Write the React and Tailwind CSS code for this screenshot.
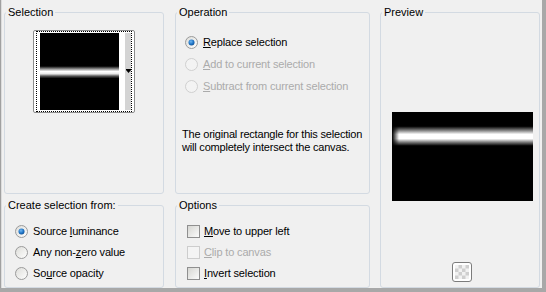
const FONT = "font-['Liberation_Sans','Arial',sans-serif]";

function Group({ title, className, children }) {
  return (
    <div
      className={`relative rounded-[3px] border border-[#d3dae2] ${className}`}
    >
      <span className="absolute left-[1px] top-[-7px] bg-[#f0f0f0] px-[2px] text-[11px] leading-[13px] text-black">
        {title}
      </span>
      {children}
    </div>
  );
}

function Radio({ checked, disabled }) {
  return (
    <svg width="13" height="13" viewBox="0 0 13 13" className="shrink-0">
      <defs>
        <linearGradient id="rbg" x1="0" y1="0" x2="1" y2="1">
          <stop offset="0" stopColor="#dcdcd8" />
          <stop offset="1" stopColor="#ffffff" />
        </linearGradient>
        <radialGradient id="rdot" cx="0.4" cy="0.35" r="0.7">
          <stop offset="0" stopColor="#6fb6f0" />
          <stop offset="0.6" stopColor="#1f74c6" />
          <stop offset="1" stopColor="#124f8f" />
        </radialGradient>
      </defs>
      <circle
        cx="6.5"
        cy="6.5"
        r="6"
        fill={disabled ? "#f3f3f3" : "url(#rbg)"}
        stroke={disabled ? "#cfcfcf" : "#9a9a9a"}
        strokeWidth="1"
      />
      {checked && <circle cx="6.5" cy="6.5" r="3" fill="url(#rdot)" />}
    </svg>
  );
}

function Checkbox({ disabled }) {
  return (
    <span
      className={`h-[13px] w-[13px] shrink-0 border ${
        disabled
          ? "border-[#cdcdcd] bg-[#f4f4f4]"
          : "border-[#8f8f8f] bg-gradient-to-br from-[#d6d6d2] to-[#fbfbfb]"
      }`}
    />
  );
}

function Label({ text, mark, disabled }) {
  const i = text.indexOf(mark);
  return (
    <span
      className={`text-[11px] leading-[13px] tracking-[-0.15px] whitespace-nowrap ${
        disabled ? "text-[#ababab]" : "text-black"
      }`}
    >
      {text.slice(0, i)}
      <u className="underline-offset-[1px]">{mark}</u>
      {text.slice(i + mark.length)}
    </span>
  );
}

function Thumb() {
  return (
    <div className="relative mx-auto mt-[17px] h-[83px] w-[102px] rounded-[2px] border border-[#8c8c8c] bg-white">
      <div className="absolute inset-x-[2px] inset-y-[0px] border border-dotted border-black" />
      <div className="flex pl-[6px] pt-[2px]">
        <svg width="79" height="77" viewBox="0 0 79 77">
          <defs>
            <linearGradient id="tband" x1="0" y1="0" x2="0" y2="1">
              <stop offset="0" stopColor="#000" />
              <stop offset="0.43" stopColor="#000" />
              <stop offset="0.47" stopColor="#9a9a9a" />
              <stop offset="0.5" stopColor="#fff" />
              <stop offset="0.53" stopColor="#e8e8e8" />
              <stop offset="0.56" stopColor="#555" />
              <stop offset="0.59" stopColor="#000" />
              <stop offset="1" stopColor="#000" />
            </linearGradient>
          </defs>
          <rect width="79" height="77" fill="url(#tband)" />
        </svg>
        <div className="h-[77px] w-[6px] bg-white" />
        <div className="relative h-[77px] w-[6px] bg-[#d4d4d4]">
          <svg
            width="5"
            height="4"
            viewBox="0 0 5 4"
            className="absolute left-[1px] top-[36px]"
          >
            <rect x="0" y="0" width="5" height="1" fill="#000" />
            <path d="M0 1 H5 L2.5 4 Z" fill="#000" />
          </svg>
        </div>
      </div>
    </div>
  );
}

function PreviewImage() {
  return (
    <svg width="141" height="89" viewBox="0 0 141 89" className="ml-[11px] mt-[99px] block">
      <defs>
        <linearGradient id="pband" x1="0" y1="0" x2="0" y2="1">
          <stop offset="0" stopColor="#000" />
          <stop offset="0.16" stopColor="#000" />
          <stop offset="0.21" stopColor="#8a8a8a" />
          <stop offset="0.25" stopColor="#fff" />
          <stop offset="0.3" stopColor="#fff" />
          <stop offset="0.34" stopColor="#7a7a7a" />
          <stop offset="0.38" stopColor="#000" />
          <stop offset="1" stopColor="#000" />
        </linearGradient>
        <linearGradient id="pfade" x1="0" y1="0" x2="1" y2="0">
          <stop offset="0" stopColor="#000" stopOpacity="1" />
          <stop offset="0.05" stopColor="#000" stopOpacity="0" />
          <stop offset="1" stopColor="#000" stopOpacity="0" />
        </linearGradient>
      </defs>
      <rect width="141" height="89" fill="url(#pband)" />
      <rect width="141" height="89" fill="url(#pfade)" />
    </svg>
  );
}

function CheckerIcon() {
  return (
    <div className="ml-[71px] mt-[61px] h-[20px] w-[20px] rounded-[3px] border border-[#7c7c7c] bg-white p-[2px]">
      <svg width="14" height="14" viewBox="0 0 14 14" className="block">
        <rect width="14" height="14" fill="#f2f2f2" />
        <rect x="3.5" y="0" width="3.5" height="3.5" fill="#cfcfcf" />
        <rect x="10.5" y="0" width="3.5" height="3.5" fill="#cfcfcf" />
        <rect x="0" y="3.5" width="3.5" height="3.5" fill="#cfcfcf" />
        <rect x="7" y="3.5" width="3.5" height="3.5" fill="#cfcfcf" />
        <rect x="3.5" y="7" width="3.5" height="3.5" fill="#cfcfcf" />
        <rect x="10.5" y="7" width="3.5" height="3.5" fill="#cfcfcf" />
        <rect x="0" y="10.5" width="3.5" height="3.5" fill="#cfcfcf" />
        <rect x="7" y="10.5" width="3.5" height="3.5" fill="#cfcfcf" />
      </svg>
    </div>
  );
}

export default function App() {
  return (
    <div className={`h-[292px] w-[546px] bg-[#a8a8a8] ${FONT}`}>
      <div className="h-[288px] w-[542px] border-l border-[#a0a0a0] bg-[#f0f0f0]">
        <div className="flex h-full border-l border-[#dcdcdc] pl-[2px] pt-[12px]">
          <div className="flex w-[160px] flex-col gap-[11px]">
            <Group title="Selection" className="h-[182px]">
              <Thumb />
            </Group>
            <Group title="Create selection from:" className="h-[83px]">
              <div className="flex flex-col pl-[10px] pt-[15px]">
                <div className="flex h-[21px] items-center gap-[5px]">
                  <Radio checked />
                  <Label text="Source luminance" mark="l" />
                </div>
                <div className="flex h-[21px] items-center gap-[5px]">
                  <Radio />
                  <Label text="Any non-zero value" mark="z" />
                </div>
                <div className="flex h-[21px] items-center gap-[5px]">
                  <Radio />
                  <Label text="Source opacity" mark="u" />
                </div>
              </div>
            </Group>
          </div>

          <div className="ml-[11px] flex w-[195px] flex-col gap-[11px]">
            <Group title="Operation" className="h-[182px]">
              <div className="flex flex-col pl-[9px] pt-[18px]">
                <div className="flex h-[22px] items-center gap-[5px]">
                  <Radio checked />
                  <Label text="Replace selection" mark="R" />
                </div>
                <div className="flex h-[22px] items-center gap-[5px]">
                  <Radio disabled />
                  <Label text="Add to current selection" mark="A" disabled />
                </div>
                <div className="flex h-[22px] items-center gap-[5px]">
                  <Radio disabled />
                  <Label text="Subtract from current selection" mark="S" disabled />
                </div>
              </div>
              <p className="mt-[31px] whitespace-nowrap pl-[6px] text-[11px] leading-[13px] tracking-[-0.2px] text-black">
                The original rectangle for this selection
                <br />
                will completely intersect the canvas.
              </p>
            </Group>
            <Group title="Options" className="h-[83px]">
              <div className="flex flex-col pl-[11px] pt-[15px]">
                <div className="flex h-[21px] items-center gap-[4px]">
                  <Checkbox />
                  <Label text="Move to upper left" mark="M" />
                </div>
                <div className="flex h-[21px] items-center gap-[4px]">
                  <Checkbox disabled />
                  <Label text="Clip to canvas" mark="C" disabled />
                </div>
                <div className="flex h-[21px] items-center gap-[4px]">
                  <Checkbox />
                  <Label text="Invert selection" mark="I" />
                </div>
              </div>
            </Group>
          </div>

          <Group title="Preview" className="ml-[10px] h-[276px] w-[160px]">
            <PreviewImage />
            <CheckerIcon />
          </Group>
        </div>
      </div>
    </div>
  );
}
